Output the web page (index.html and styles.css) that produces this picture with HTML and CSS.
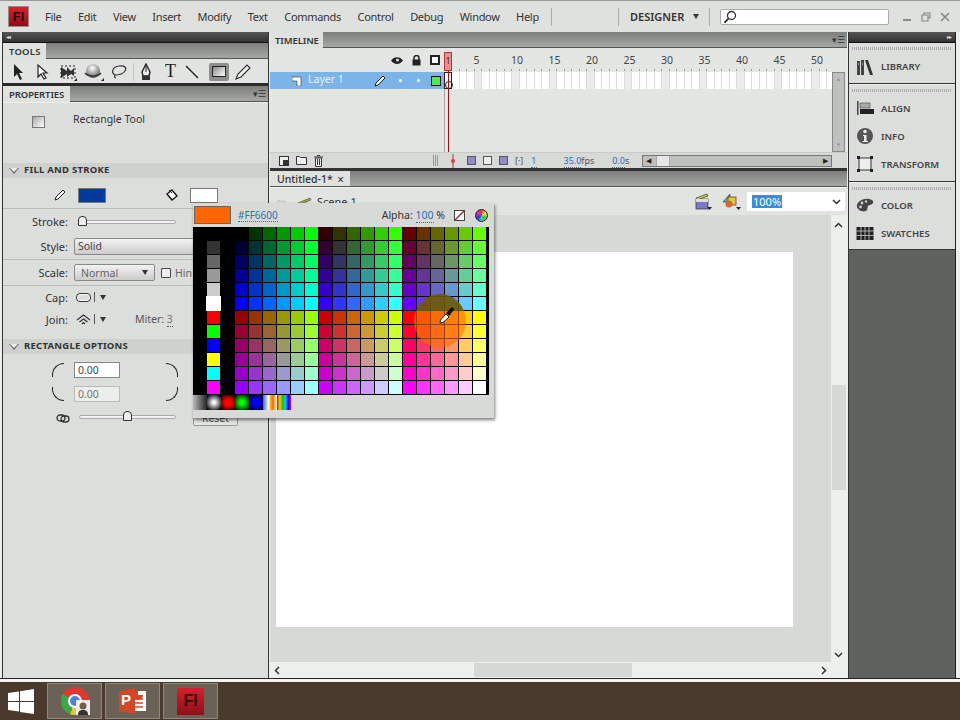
FILE: index.html
```html
<!DOCTYPE html>
<html lang="en">
<head>
<meta charset="utf-8">
<title>Flash Professional</title>
<link rel="stylesheet" href="styles.css">
</head>
<body>
<div class="app">
  <header class="titlebar">
    <div class="fl-logo"><span>Fl</span></div>
    <nav class="menu">
      <span>File</span><span>Edit</span><span>View</span><span>Insert</span><span>Modify</span><span>Text</span><span>Commands</span><span>Control</span><span>Debug</span><span>Window</span><span>Help</span>
    </nav>
    <i class="vsep sep-a"></i>
    <i class="vsep sep-b"></i>
    <span class="workspace">DESIGNER</span>
    <i class="tri-down ws-arrow"></i>
    <i class="vsep sep-c"></i>
    <div class="search">
      <svg width="14" height="14" viewBox="0 0 14 14"><circle cx="8.5" cy="5.5" r="4" fill="none" stroke="#333" stroke-width="1.3"/><path d="M5.6 8.4 1.5 12.6" stroke="#222" stroke-width="1.6"/></svg>
    </div>
    <div class="winbtns">
      <svg width="10" height="10" viewBox="0 0 10 10"><path d="M1 8h8" stroke="#888" stroke-width="2"/></svg>
      <svg width="10" height="10" viewBox="0 0 10 10"><path d="M3 3V1h6v5H7M1 3h6v6H1z" fill="none" stroke="#888" stroke-width="1.2"/></svg>
      <svg width="10" height="10" viewBox="0 0 10 10"><path d="M1 1l8 8M9 1 1 9" stroke="#888" stroke-width="1.6"/></svg>
    </div>
  </header>

  <main class="workspace-area">
    <section class="left-col">
      <div class="collapse-bar"><span class="chev">◂◂</span></div>
      <div class="tabbar"><span class="tab tab-tools">TOOLS</span></div>
      <div class="toolrow">
        <svg class="tool" width="14" height="18" viewBox="0 0 14 18"><path d="M3 1v13l3-3 3 6 2-1-3-6h4z" fill="#222"/></svg>
        <svg class="tool t2" width="14" height="18" viewBox="0 0 14 18"><path d="M3 2v12l3-3 3 5 2-1-3-5h4z" fill="#fff" stroke="#222" stroke-width="1.2"/></svg>
        <svg class="tool t3" width="18" height="18" viewBox="0 0 18 18"><path d="M2 4l6 4V4l4 4 3-3v8l-3-2-4 3v-3l-6 4z" fill="#333"/><path d="M2 3h14v12H2z" fill="none" stroke="#222" stroke-dasharray="2 2"/><path d="M15 18h3v-3z" fill="#222"/></svg>
        <svg class="tool t4" width="20" height="18" viewBox="0 0 20 18"><defs><radialGradient id="ball" cx=".45" cy=".3" r=".75"><stop offset="0" stop-color="#fff"/><stop offset=".6" stop-color="#999"/><stop offset="1" stop-color="#444"/></radialGradient></defs><circle cx="9" cy="8" r="7" fill="url(#ball)"/><path d="M1 10c3 4 13 4 16 0" fill="none" stroke="#333" stroke-width="1.3"/><path d="M17 18h3v-3z" fill="#222"/></svg>
        <svg class="tool t5" width="18" height="18" viewBox="0 0 18 18"><path d="M5 12C1 10 2 4 9 3c6-1 8 2 6 5-2 3-6 4-10 4zM5 12c-1 2 0 3 1 3" fill="none" stroke="#333" stroke-width="1.2"/></svg>
        <i class="toolsep"></i>
        <svg class="tool t6" width="14" height="18" viewBox="0 0 14 18"><path d="M7 1l4 8-1 4H4L3 9z" fill="#eee" stroke="#222" stroke-width="1.4"/><path d="M7 3v6" stroke="#222"/><rect x="3" y="13" width="8" height="4" fill="#333"/></svg>
        <span class="t-glyph">T</span>
        <svg class="tool t8" width="16" height="16" viewBox="0 0 16 16"><path d="M2 2l12 12" stroke="#222" stroke-width="1.4"/></svg>
        <div class="rect-tool"><i></i></div>
        <svg class="tool t10" width="18" height="18" viewBox="0 0 18 18"><path d="M2 16l2-5L13 2l3 3-9 9z" fill="#eee" stroke="#333" stroke-width="1.2"/></svg>
      </div>
      <div class="darkline"></div>
      <div class="tabbar"><span class="tab tab-props">PROPERTIES</span><span class="panel-menu">▾☰</span></div>
      <div class="props">
        <div class="prop-head"><i class="rect-mini"></i><span>Rectangle Tool</span></div>
        <div class="section-head"><i class="tri-open"></i>FILL AND STROKE</div>
        <div class="row fill-row">
          <svg class="pencil" width="12" height="12" viewBox="0 0 12 12"><path d="M1 11l1-3 7-7 2 2-7 7z" fill="#fff" stroke="#222"/></svg>
          <i class="stroke-swatch"></i>
          <svg class="bucket" width="14" height="14" viewBox="0 0 14 14"><path d="M2 6l5-4 5 6-5 4z" fill="#fff" stroke="#111" stroke-width="1.3"/><path d="M4 2l3 3" stroke="#111"/></svg>
          <i class="fill-swatch"></i>
        </div>
        <div class="row-group">
          <div class="row"><label>Stroke:</label><div class="slider s-stroke"><i class="thumb"></i></div></div>
          <div class="row"><label>Style:</label><div class="combo combo-wide">Solid</div></div>
        </div>
        <div class="row-group">
          <div class="row"><label>Scale:</label><div class="combo combo-scale"><span>Normal</span><i class="tri-down"></i></div><i class="check"></i><span class="hint">Hin</span></div>
        </div>
        <div class="row-group plain">
          <div class="row"><label>Cap:</label><i class="cap-icon"></i><b class="bar"></b><i class="tri-down"></i></div>
          <div class="row"><label>Join:</label>
            <svg class="join-icon" width="15" height="11" viewBox="0 0 15 11"><path d="M1 6l6.500-5 6.500 5M3.500 8l4-3 4 3M6 10l1.500-1.500L9 10" fill="none" stroke="#333" stroke-width="1.2"/></svg>
            <b class="bar"></b><i class="tri-down"></i><span class="miter">Miter: <u>3</u></span></div>
        </div>
        <div class="section-head"><i class="tri-open"></i>RECTANGLE OPTIONS</div>
        <div class="corners">
          <i class="corner c-tl"></i><input class="num" value="0.00" readonly><i class="corner c-tr"></i>
          <i class="corner c-bl"></i><input class="num dim" value="0.00" readonly><i class="corner c-br"></i>
        </div>
        <div class="row link-row">
          <svg width="14" height="9" viewBox="0 0 14 9"><rect x="1" y="1" width="8" height="6" rx="3" fill="none" stroke="#333" stroke-width="1.3"/><rect x="5" y="2" width="8" height="6" rx="3" fill="none" stroke="#333" stroke-width="1.3"/></svg>
          <div class="slider s-radius"><i class="thumb"></i></div>
          <span class="reset">Reset</span>
        </div>
      </div>
    </section>

    <section class="center-col">
      <div class="timeline">
        <div class="tabbar"><span class="tab tab-tl">TIMELINE</span><span class="panel-menu">▾☰</span></div>
        <div class="tl-main">
          <div class="tl-body">
            <div class="tl-ruler">
              <div class="tl-icons">
                <svg width="12" height="9" viewBox="0 0 12 9"><path d="M0 4.500C3 0 9 0 12 4.500 9 9 3 9 0 4.500z" fill="#222"/><circle cx="6.500" cy="4" r="1.500" fill="#ddd"/></svg>
                <svg width="9" height="11" viewBox="0 0 9 11"><path d="M2 5V3a2.500 2.500 0 0 1 5 0v2" fill="none" stroke="#222" stroke-width="1.500"/><rect x="0.500" y="4.500" width="8" height="6" fill="#222"/></svg>
                <i class="outline-sq"></i>
              </div>
              <div class="ruler-nums" id="ruler"></div>
            </div>
            <div class="tl-layer">
              <div class="layer-info">
                <svg class="layer-page" width="10" height="10" viewBox="0 0 10 10"><path d="M0 1h9v9H5V5H0z" fill="#fff" stroke="#333" stroke-width=".6"/></svg>
                <span class="layer-name">Layer 1</span>
                <svg class="layer-pen" width="12" height="12" viewBox="0 0 12 12"><path d="M1 11l1-3 7-7 2 2-7 7z" fill="#fff" stroke="#222"/></svg>
                <i class="dot d1"></i><i class="dot d2"></i>
                <i class="green-sq"></i>
              </div>
              <div class="frames"><i class="keyframe"></i></div>
            </div>
            <div class="tl-empty"></div>
          </div>
          <div class="tl-vscroll"><i class="arrow-up">▲</i><i class="arrow-dn">▼</i></div>
        </div>
        <div class="tl-foot">
          <svg class="f-i" width="10" height="10" viewBox="0 0 10 10"><rect x=".5" y=".5" width="9" height="9" fill="#eee" stroke="#333"/><rect x="4" y="4" width="5" height="5" fill="#333"/></svg>
          <svg class="f-i" width="11" height="9" viewBox="0 0 11 9"><path d="M.5.500h3l1 1h6v7H.500z" fill="#eee" stroke="#333"/></svg>
          <svg class="f-i" width="9" height="12" viewBox="0 0 9 12"><path d="M1.500 3h6v8.500h-6zM0 2h9M3 .5h3" fill="#eee" stroke="#333"/><path d="M3.500 4v6M5.500 4v6" stroke="#333"/></svg>
          <i class="grip"></i>
          <svg class="f-play" width="6" height="14" viewBox="0 0 6 14"><path d="M3 0v14" stroke="#b33"/><circle cx="3" cy="7" r="2" fill="#c44"/></svg>
          <div class="onion"><i></i><i class="hollow"></i><i></i><span class="bracket">[·]</span></div>
          <u class="f-num">1</u>
          <span class="fps"><u>35.0</u>fps</span>
          <span class="sec"><u>0.0</u>s</span>
          <div class="tl-hscroll"><i class="ar">◀</i><i class="hthumb"></i><i class="ar ar-r">▶</i></div>
        </div>
      </div>
      <div class="doc-tabs"><span class="tab tab-doc">Untitled-1* <em>×</em></span></div>
      <div class="editbar">
        <span class="back">⇦</span>
        <svg class="scene-ic" width="15" height="9" viewBox="0 0 15 9"><path d="M1 6l12-5 1 2L2 8z" fill="#a9a23a" stroke="#444" stroke-width=".6"/><rect x="0" y="7" width="15" height="2" fill="#668"/></svg>
        <span class="scene">Scene 1</span>
        <div class="edit-right">
          <svg width="17" height="17" viewBox="0 0 17 17"><rect x="1" y="6" width="12" height="10" fill="#7c78c4" stroke="#333" stroke-width=".7"/><path d="M1 5l11-4 1 2L2 7z" fill="#d6cb4a" stroke="#333" stroke-width=".7"/><rect x="1" y="6" width="12" height="3" fill="#ddd"/><path d="M12 14h5l-2.500 3z" fill="#222"/></svg>
          <svg width="19" height="17" viewBox="0 0 19 17"><path d="M1 9l7-8v8z" fill="#5dbb7a" stroke="#333" stroke-width=".7"/><rect x="6" y="4" width="8" height="8" fill="#e8c83a" stroke="#333" stroke-width=".7"/><circle cx="7" cy="11" r="3.500" fill="#e0603a"/><path d="M14 14h5l-2.500 3z" fill="#222"/></svg>
          <div class="zoom-select"><span>100%</span><svg width="9" height="6" viewBox="0 0 9 6"><path d="M1 1l3.500 3.500L8 1" fill="none" stroke="#333" stroke-width="1.500"/></svg></div>
        </div>
      </div>
      <div class="stage-wrap">
        <div class="stage-row">
          <div class="pasteboard"><div class="stage"></div></div>
          <div class="stage-v"><i class="sv-thumb"></i><svg class="sv-up" width="9" height="6" viewBox="0 0 9 6"><path d="M1 5l3.500-3.500L8 5" fill="none" stroke="#333" stroke-width="1.500"/></svg><svg class="sv-dn" width="9" height="6" viewBox="0 0 9 6"><path d="M1 1l3.500 3.500L8 1" fill="none" stroke="#333" stroke-width="1.500"/></svg></div>
        </div>
        <div class="stage-h">
          <svg class="sh-l" width="6" height="9" viewBox="0 0 6 9"><path d="M5 1 1.500 4.500 5 8" fill="none" stroke="#333" stroke-width="1.500"/></svg>
          <i class="sh-thumb"></i>
          <svg class="sh-r" width="6" height="9" viewBox="0 0 6 9"><path d="M1 1l3.500 3.500L1 8" fill="none" stroke="#333" stroke-width="1.500"/></svg>
        </div>
      </div>
    </section>

    <aside class="right-col">
      <div class="collapse-bar right"><span class="chev">▸▸</span></div>
      <div class="dock dock-1">
        <i class="dock-grip"></i>
        <div class="dock-item">
          <svg width="18" height="16" viewBox="0 0 18 16"><path d="M1 2h3v14H1zM5 1h3v15H5z" fill="#444"/><path d="M9 1h3l5 15h-3z" fill="#333"/><path d="M2 5h1M6 5h1" stroke="#ddd"/></svg>
          <span>LIBRARY</span>
        </div>
      </div>
      <div class="dock dock-2">
        <i class="dock-grip"></i>
        <div class="dock-item">
          <svg width="18" height="16" viewBox="0 0 18 16"><path d="M1 1h1.500v14H1z" fill="#444"/><rect x="4" y="3" width="10" height="5" fill="#aaa" stroke="#444" stroke-width=".6"/><rect x="4" y="9" width="14" height="5" fill="#222"/></svg>
          <span>ALIGN</span>
        </div>
        <div class="dock-item">
          <svg width="18" height="18" viewBox="0 0 18 18"><circle cx="9" cy="9" r="8" fill="#555"/><circle cx="9" cy="4.500" r="1.800" fill="#eee"/><path d="M7 8h3.500v6H12v1H6.500v-1H8V9H7z" fill="#eee"/></svg>
          <span>INFO</span>
        </div>
        <div class="dock-item">
          <svg width="18" height="18" viewBox="0 0 18 18"><rect x="3" y="3" width="12" height="12" fill="#eee" stroke="#333"/><path d="M1 1h3v3H1zM14 1h3v3h-3zM1 14h3v3H1zM14 14h3v3h-3z" fill="#222"/></svg>
          <span>TRANSFORM</span>
        </div>
      </div>
      <div class="dock dock-3">
        <i class="dock-grip"></i>
        <div class="dock-item">
          <svg width="18" height="14" viewBox="0 0 18 14"><path d="M1 9C0 4 7 0 13 1c6 1 5 5 1 6-3 0-2 3-3 5-2 3-9 1-10-3z" fill="#444"/><circle cx="6" cy="5" r="1.400" fill="#ccc"/><circle cx="10" cy="3.500" r="1.200" fill="#ccc"/><circle cx="4.500" cy="9" r="1.400" fill="#ccc"/></svg>
          <span>COLOR</span>
        </div>
        <div class="dock-item">
          <svg width="17" height="13" viewBox="0 0 17 13"><rect width="17" height="13" fill="#222"/><path d="M4.500 0v13M8.500 0v13M12.500 0v13M0 4h17M0 8.500h17" stroke="#ccc" stroke-width=".8"/></svg>
          <span>SWATCHES</span>
        </div>
      </div>
      <div class="dock-empty"></div>
    </aside>
  </main>

  <footer class="taskbar">
    <svg class="win" width="26" height="25" viewBox="0 0 26 25"><path d="M0 4l11-1.500V12H0zM12 2.300 26 0v12H12zM0 13h11v9.500L0 21zM12 13h14v12l-14-2z" fill="#fff"/></svg>
    <div class="task-btn">
      <div class="chrome"><i></i></div>
      <svg class="badge" width="14" height="15" viewBox="0 0 14 15"><rect width="14" height="15" fill="#eee"/><circle cx="7" cy="6" r="3.500" fill="#7a5a45"/><path d="M2 15c0-4 2-5 5-5s5 1 5 5z" fill="#333"/></svg>
    </div>
    <div class="task-btn">
      <svg width="28" height="26" viewBox="0 0 28 26"><rect x="12" y="3" width="15" height="20" fill="#fff"/><path d="M15 11h9M15 15h9M15 19h9" stroke="#d24726" stroke-width="1.500"/><path d="M0 3l16-3v26L0 23z" fill="#d24726"/><path d="M19 2a5 5 0 1 0 5 5h-5z" fill="#d24726"/></svg>
      <span class="ppt-p">P</span>
    </div>
    <div class="task-btn"><div class="fl-logo task-logo"><span>Fl</span></div></div>
  </footer>

  <div class="picker">
    <div class="picker-top">
      <i class="current"></i>
      <span class="hex">#FF6600</span>
      <span class="alpha">Alpha: <u>100</u> %</span>
      <svg class="nocolor" width="11" height="11" viewBox="0 0 11 11"><rect x=".5" y=".5" width="10" height="10" fill="#fff" stroke="#444"/><path d="M1 10 10 1" stroke="#b02030" stroke-width="1.500"/></svg>
      <i class="wheel"></i>
    </div>
    <div class="palette" id="palette"></div>
    <div class="gradients">
      <i class="g g-gray"></i><i class="g g-white"></i><i class="g g-red"></i><i class="g g-green"></i><i class="g g-blue"></i><i class="g g-bands"></i><i class="g g-rainbow"></i>
    </div>
  </div>
  <i class="highlight"></i>
  <svg class="dropper" width="17" height="17" viewBox="0 0 17 17"><path d="M1 16l.500-3L7 7l3 3-6 5.500z" fill="#fff" stroke="#222"/><path d="M7 6l3.500-3.500c1-2 3-2.500 4-1.500s.5 3-1.500 4L10.500 9z" fill="#111"/></svg>
  <i class="playhead"><span>1</span></i>
</div>
<script src="app.js"></script>
</body>
</html>
```
FILE: styles.css
```css
* { box-sizing: border-box; }
html, body { margin: 0; padding: 0; }
body { width: 960px; height: 720px; overflow: hidden; background: #fff; font-family: "Noto Sans", "Open Sans", sans-serif; font-size: 11px; color: #333; }
i, em { font-style: normal; display: block; }
u { text-decoration: none; border-bottom: 1px dotted #2a6fb0; color: #2a6fb0; }
.app { position: relative; width: 960px; height: 720px; display: flex; flex-direction: column; background: #e4e6e4; }

/* title bar */
.titlebar { height: 32px; flex: none; display: flex; align-items: center; background: #dfe1df; border-top: 1px solid #999; padding-left: 8px; }
.fl-logo { width: 21px; height: 21px; background: linear-gradient(#d8202c, #8e0f18); border: 1px solid #9a8a8a; display: flex; align-items: center; justify-content: center; color: #2a0508; font: bold 13px "Liberation Sans", sans-serif; }
.menu { display: flex; gap: 16.500px; margin-left: 16px; font-size: 11px; letter-spacing: -.3px; color: #333; width: 494px; white-space: nowrap; }
.vsep { width: 1px; height: 18px; background: #aaa; flex: none; }
.sep-a { margin-left: 12px; }
.sep-b { margin-left: 66px; }
.workspace { margin-left: 11px; font-weight: 600; font-size: 11px; width: 56px; white-space: nowrap; }
.tri-down { width: 0; height: 0; border-left: 3.500px solid transparent; border-right: 3.500px solid transparent; border-top: 5px solid #333; flex: none; }
.ws-arrow { margin-left: 7px; }
.sep-c { margin-left: 10px; }
.search { width: 169px; height: 16px; margin-left: 10px; background: #fff; border: 1px solid #aaa; border-radius: 2px; display: flex; align-items: center; padding-left: 2px; }
.winbtns { display: flex; gap: 9px; margin-left: 13px; }

/* columns */
.workspace-area { height: 647px; flex: none; display: flex; background: #eceeec; padding-left: 2px; border-bottom: 1px solid #222; }
.left-col { width: 267px; flex: none; display: flex; flex-direction: column; background: #dcdedc; border-left: 1px solid #333; border-right: 1px solid #333; }
.center-col { width: 577px; margin-left: 1px; flex: none; display: flex; flex-direction: column; }
.right-col { width: 108px; margin-left: 1px; flex: none; display: flex; flex-direction: column; border-right: 1px solid #222; border-left: 1px solid #333; }

.collapse-bar { height: 11px; background: linear-gradient(#555, #333); color: #ddd; font-size: 6px; line-height: 11px; padding-left: 3px; letter-spacing: -1px; flex: none; border-bottom: 1px solid #111; }
.collapse-bar.right { text-align: right; padding-right: 4px; }
.tabbar { height: 16px; flex: none; display: flex; justify-content: space-between; background: linear-gradient(#7d7f7d, #a5a7a5); border-bottom: 1px solid #555; }
.tab { height: 16px; background: #e0e2e0; padding: 0 6px; font-size: 9.500px; font-weight: 600; line-height: 17px; color: #333; letter-spacing: -.1px; }
.tab-tools { width: 43px; letter-spacing: .2px; }
.tab-props { width: 67px; }
.tab-tl { width: 53px; padding-left: 5px; }
.panel-menu { color: #333; font-size: 9px; line-height: 15px; padding-right: 2px; }

.toolrow { height: 24px; flex: none; position: relative; display: flex; align-items: center; padding: 1px 0 0 8px; background: #e2e4e2; }
.tool { flex: none; }
.t2 { margin-left: 10px; }
.t3 { margin-left: 10px; }
.t4 { margin-left: 7px; }
.t5 { margin-left: 6px; }
.toolsep { width: 1px; height: 18px; background: #c4c6c4; margin-left: 5px; flex: none; }
.t6 { margin-left: 5px; }
.t-glyph { margin-left: 12px; font: 18px "Liberation Serif", serif; color: #222; width: 11px; }
.t8 { margin-left: 8px; }
.rect-tool { width: 20px; height: 18px; margin-left: 9px; background: #8d8f8d; border-radius: 2px; display: flex; align-items: center; justify-content: center; }
.rect-tool i { width: 14px; height: 11px; background: linear-gradient(135deg, #888, #fff); border: 1px solid #222; }
.t10 { margin-left: 5px; }
.darkline { height: 3px; background: #2a2a2a; flex: none; }

/* properties */
.props { flex: 1; background: #dcdedc; display: flex; flex-direction: column; min-height: 0; overflow: hidden; border-top: 1px solid #eee; }
.prop-head { height: 60px; flex: none; position: relative; padding: 9px 0 0 70px; font-size: 10.500px; }
.rect-mini { position: absolute; left: 29px; top: 13px; width: 13px; height: 12px; background: linear-gradient(135deg, #aaa, #fff); border: 1px solid #777; }
.section-head { height: 15px; flex: none; background: #cfd1cf; display: flex; align-items: center; font-size: 9.500px; font-weight: 700; color: #333; padding: 0 0 2px 6px; gap: 5px; letter-spacing: .25px; }
.tri-open { width: 0; height: 0; position: relative; top: 1px; border-left: 5px solid transparent; border-right: 5px solid transparent; border-top: 6px solid #666; }
.tri-open::after { content: ""; position: absolute; left: -4px; top: -6px; width: 0; height: 0; border-left: 4px solid transparent; border-right: 4px solid transparent; border-top: 4.500px solid #eee; }
.row { height: 25px; display: flex; align-items: center; flex: none; }
.row label { width: 65px; text-align: right; font-size: 11px; margin-right: 6px; flex: none; }
.fill-row { height: 31px; border-bottom: 1px solid #bbb; padding-top: 4px; }
.pencil { margin-left: 51px; }
.stroke-swatch { width: 28px; height: 15px; background: #003a9e; border: 1px solid #777; margin-left: 12px; }
.bucket { margin-left: 59px; }
.fill-swatch { width: 28px; height: 15px; background: #fff; border: 1px solid #777; margin-left: 11px; }
.row-group { border-bottom: 1px solid #bbb; flex: none; }
.row-group.plain { border-bottom: 0; height: 53px; }
.plain .row { height: 22px; }
.slider { position: relative; height: 4px; background: #f2f2f2; border: 1px solid #aaa; border-radius: 2px; flex: none; }
.s-stroke { width: 97px; margin-left: 5px; }
.thumb { position: absolute; width: 9px; height: 10px; top: -5px; background: #eee; border: 1px solid #333; border-radius: 4px 4px 0 0; }
.s-stroke .thumb { left: -2px; }
.s-radius { width: 97px; margin-left: 9px; margin-top: -4px; }
.s-radius .thumb { left: 43px; }
.combo { height: 17px; background: linear-gradient(#f2f2f2, #ccc); border: 1px solid #888; border-radius: 2px; font-size: 10.500px; line-height: 14px; padding-left: 3px; color: #444; flex: none; }
.combo-wide { width: 140px; }
.combo-scale { width: 81px; display: flex; align-items: center; justify-content: space-between; padding: 0 6px; color: #666; margin-right: 6px; }
.check { width: 10px; height: 10px; border: 1px solid #444; background: #eee; border-radius: 1px; flex: none; }
.hint { margin-left: 4px; font-size: 10.500px; color: #666; }
.cap-icon { width: 15px; height: 9px; margin-left: 2px; border: 1.500px solid #333; border-radius: 4px; box-shadow: inset 0 0 0 1px #fff; }
.join-icon { margin-left: 2px; }
.bar { width: 1px; height: 10px; background: #555; margin: 0 5px 0 3px; flex: none; }
.miter { margin-left: 29px; color: #555; font-size: 10.500px; }
.miter u { color: #777; border-color: #555; }
.corners { display: grid; grid-template-columns: 24px 46px 60px; grid-auto-rows: 24px; justify-content: start; align-items: center; padding-left: 47px; height: 52px; padding-top: 4px; flex: none; }
.num { width: 46px; height: 16px; border: 1px solid #888; background: #fff; font: 10.500px "Noto Sans", sans-serif; color: #444; padding: 0 0 0 3px; }
.num.dim { background: #eceeec; border-color: #bbb; color: #777; }
.corner { width: 12px; height: 14px; border: 1.500px solid #222; }
.c-tl { border-right: 0; border-bottom: 0; border-radius: 12px 0 0 0; margin-left: 2px; }
.c-bl { border-right: 0; border-top: 0; border-radius: 0 0 0 12px; margin-left: 2px; }
.c-tr { border-left: 0; border-bottom: 0; border-radius: 0 12px 0 0; margin-left: 46px; }
.c-br { border-left: 0; border-top: 0; border-radius: 0 0 12px 0; margin-left: 46px; }
.link-row { padding-left: 53px; }
.reset { margin-left: 17px; width: 45px; height: 15px; border: 1px solid #999; border-radius: 2px; text-align: center; font-size: 10.500px; line-height: 13px; color: #555; background: #e4e4e4; }

/* timeline */
.timeline { height: 136px; flex: none; display: flex; flex-direction: column; background: #e4e6e4; }
.tl-main { flex: 1; display: flex; min-height: 0; }
.tl-body { flex: 1; min-width: 0; display: flex; flex-direction: column; }
.tl-ruler { height: 24px; flex: none; display: flex; }
.tl-icons { width: 174px; flex: none; display: flex; align-items: center; justify-content: flex-end; gap: 9px; padding-right: 4px; }
.outline-sq { width: 10px; height: 10px; border: 2px solid #222; background: #fff; }
.ruler-nums { flex: 1; position: relative; display: flex; font-size: 10.500px; color: #444; line-height: 24px; background: repeating-linear-gradient(90deg, #999 0 1px, transparent 1px 7.500px) 0 21px / 100% 2px no-repeat; overflow: hidden; }
.ruler-nums span { flex: none; text-align: left; width: 37.500px; }
.ruler-nums span:first-child { width: 29.500px; }
.tl-layer { height: 17px; flex: none; display: flex; }
.layer-info { width: 174px; flex: none; background: #7ab4e8; position: relative; display: flex; align-items: center; }
.layer-page { margin-left: 22px; flex: none; }
.layer-name { margin: -3px 0 0 6px; color: #e8f2fb; font-size: 10.500px; white-space: nowrap; width: 38px; }
.layer-pen { margin-left: 28px; flex: none; }
.dot { width: 3px; height: 3px; border-radius: 50%; background: #fff; flex: none; }
.d1 { margin-left: 13px; }
.d2 { margin-left: 15px; }
.green-sq { width: 10px; height: 10px; background: #4bea52; border: 1px solid #111; margin-left: 11px; flex: none; }
.frames { flex: 1; background: repeating-linear-gradient(90deg, #fff 0 30px, #ececec 30px 37.500px); position: relative; }
.frames::before { content: ""; position: absolute; inset: 0; background: repeating-linear-gradient(90deg, #dcdcdc 0 1px, transparent 1px 7.500px); }
.keyframe { position: absolute; left: 0; top: 0; width: 8px; height: 17px; background: #fff; border: 1px solid #222; }
.keyframe::after { content: ""; position: absolute; left: 0; top: 8px; width: 6px; height: 6px; border: 1px solid #222; border-radius: 50%; }
.tl-empty { flex: 1; background: linear-gradient(#a8aaa8, #a8aaa8) 174px 0 / 1px 100% no-repeat; }
.tl-vscroll { width: 13px; flex: none; margin: 24px 2px 0 0; background: #bfc1bf; border: 1px solid #888; position: relative; color: #999; font-size: 6px; text-align: center; }
.arrow-up { position: absolute; top: 2px; left: 0; right: 0; }
.arrow-dn { position: absolute; bottom: 2px; left: 0; right: 0; }
.tl-foot { height: 16px; flex: none; background: #d8dad8; display: flex; align-items: center; font-size: 9px; color: #555; border-top: 1px solid #c8cac8; padding-left: 9px; }
.f-i { margin-right: 7px; flex: none; }
.grip { width: 6px; height: 11px; margin-left: 103px; background: repeating-linear-gradient(90deg, #999 0 1px, transparent 1px 2px); flex: none; }
.f-play { margin-left: 11px; flex: none; }
.onion { display: flex; align-items: center; margin-left: 11px; gap: 7px; flex: none; }
.onion i { width: 9px; height: 9px; background: #8d8bc8; border: 1px solid #555; }
.onion .hollow { background: #eee; }
.bracket { font-size: 9px; color: #555; }
.f-num { margin-left: 8px; flex: none; }
.fps { margin-left: 27px; flex: none; }
.sec { margin-left: 18px; flex: none; }
.tl-hscroll { margin-left: 13px; width: 190px; height: 12px; background: #bfc1bf; border: 1px solid #777; position: relative; color: #222; font-size: 7px; line-height: 10px; display: flex; flex: none; padding-left: 3px; }
.hthumb { width: 14px; height: 10px; background: #e6e6e6; margin-left: 5px; border-left: 1px solid #aaa; border-right: 1px solid #aaa; }
.ar-r { margin-left: auto; padding-right: 3px; }
.doc-tabs { height: 19px; flex: none; background: linear-gradient(#7d7f7d, #a5a7a5); border-top: 3px solid #333; border-bottom: 1px solid #555; }
.tab-doc { display: flex; width: 80px; height: 15px; align-items: center; justify-content: space-between; font-size: 10.500px; font-weight: 500; letter-spacing: 0; padding: 1px 6px 0 7px; }
.tab-doc em { font-size: 12px; font-weight: 400; }
.editbar { height: 28px; flex: none; display: flex; align-items: center; background: #e2e4e2; border-top: 1px solid #f2f2f2; padding-left: 6px; }
.back { color: #bbb; font-size: 12px; width: 22px; }
.scene-ic { margin-left: -1px; }
.scene { margin-left: 5px; font-size: 11px; }
.edit-right { margin-left: auto; display: flex; align-items: center; gap: 10px; margin-right: 2px; }
.zoom-select { width: 98px; height: 19px; margin-left: -4px; background: #fff; display: flex; align-items: center; justify-content: space-between; padding: 0 4px 0 5px; font-size: 11px; }
.zoom-select span { background: #3390e0; color: #fff; padding: 0 1px; line-height: 13px; }
.stage-wrap { flex: 1; min-height: 0; display: flex; flex-direction: column; background: #eef0ee; }
.stage-row { flex: 1; display: flex; min-height: 0; }
.pasteboard { flex: 1; min-width: 0; background: #d7d9d7; padding: 37px 0 0 6px; }
.stage { width: 517px; height: 375px; background: #fff; }
.stage-v { width: 16px; flex: none; position: relative; }
.sv-thumb { position: absolute; left: 1px; right: 1px; top: 170px; height: 105px; background: #d6d8d6; }
.sv-up { position: absolute; left: 3px; top: 7px; }
.sv-dn { position: absolute; left: 3px; bottom: 4px; }
.stage-h { height: 16px; flex: none; position: relative; }
.sh-l { position: absolute; left: 4px; top: 4px; }
.sh-r { position: absolute; left: 551px; top: 4px; }
.sh-thumb { position: absolute; left: 204px; width: 158px; top: 1px; bottom: 1px; background: #d6d8d6; }

/* right dock */
.dock { background: #dcdedc; flex: none; border-bottom: 1px solid #333; padding-top: 4px; }
.dock-1 { height: 41px; }
.dock-2 { height: 98px; border-top: 1px solid #eee; }
.dock-3 { height: 68px; border-top: 1px solid #eee; }
.dock-grip { height: 3px; margin: 0 3px; background: repeating-linear-gradient(90deg, #aaa 0 1px, transparent 1px 2px); }
.dock-item { height: 28px; display: flex; align-items: center; font-size: 9.500px; font-weight: 600; color: #444; }
.dock-1 .dock-item { height: 33px; }
.dock-2 .dock-item:first-of-type { margin-top: 2px; }
.dock-3 .dock-item:first-of-type { margin-top: 1px; }
.dock-item svg { margin-left: 7px; flex: none; width: 18px; }
.dock-item span { margin-left: 7px; }
.dock-empty { flex: 1; background: #5f625f; }

/* task bar */
.taskbar { flex: 1; display: flex; align-items: center; background: #4a3a2d; border-top: 3px solid #f3f3f3; gap: 3px; padding-left: 8px; }
.win { margin-right: 10px; flex: none; }
.task-btn { width: 55px; height: 36px; background: #6a6157; border: 1px solid #8e8880; display: flex; align-items: center; justify-content: center; position: relative; }
.chrome { width: 28px; height: 28px; border-radius: 50%; background: conic-gradient(#e0382e 0 120deg, #f2c32e 120deg 200deg, #3da846 200deg 300deg, #e0382e 300deg); position: relative; }
.chrome i { position: absolute; left: 7px; top: 7px; width: 14px; height: 14px; border-radius: 50%; background: #4a80e8; border: 2px solid #fff; }
.badge { position: absolute; left: 28px; top: 16px; }
.ppt-p { position: absolute; left: 15px; top: 7px; color: #fff; font: bold 15px "Liberation Sans", sans-serif; }
.task-logo { width: 27px; height: 27px; border: 0; font-size: 16px; }

/* colour picker popup */
.picker { position: absolute; left: 193px; top: 203px; width: 301px; height: 215px; background: #d8dad8; box-shadow: 1px 2px 3px rgba(0,0,0,.5); }
.picker-top { height: 24px; display: flex; align-items: center; font-size: 10.500px; position: relative; }
.current { width: 37px; height: 18px; margin-left: 1px; background: #ff6600; border: 1px solid #666; }
.hex { margin-left: 7px; color: #2a6fb0; border-bottom: 1px dotted #2a6fb0; line-height: 12px; font-size: 10px; }
.alpha { margin-left: auto; margin-right: 9px; color: #333; }
.nocolor { margin-right: 10px; flex: none; }
.wheel { width: 13px; height: 13px; border-radius: 50%; margin-right: 6px; background: conic-gradient(#e33, #ee3, #3c3, #3cc, #33c, #c3c, #e33); border: 1px solid #222; }
.palette { width: 296px; display: grid; grid-template-columns: repeat(21, 13px); grid-auto-rows: 13px; gap: 1px; padding: 0 1px 1px 0; background: #000; }
.palette i.sel { box-shadow: 0 0 0 1px #fff; position: relative; }
.gradients { display: flex; height: 15px; width: 99px; }
.g { width: 14px; height: 15px; flex: none; }
.g-gray { background: linear-gradient(90deg, #bbb, #222); }
.g-white { background: radial-gradient(circle, #fff 10%, #000 90%); }
.g-red { background: radial-gradient(circle, #f00 30%, #000 100%); }
.g-green { background: radial-gradient(circle, #0f0 20%, #000 100%); }
.g-blue { background: radial-gradient(circle, #00f 30%, #000 100%); }
.g-bands { background: linear-gradient(90deg, #36f, #fff 40%, #fc0 50%, #f60 70%, #fff); }
.g-rainbow { background: linear-gradient(90deg, #f00, #fc0, #0c0, #0cf, #00f, #c0f); }
.highlight { position: absolute; left: 414px; top: 294px; width: 52px; height: 54px; border-radius: 50%; background: linear-gradient(rgba(110,90,0,.9) 0 17px, rgba(255,110,0,.6) 17px 100%); }
.dropper { position: absolute; left: 439px; top: 307px; }
.playhead { position: absolute; left: 444px; top: 52px; width: 8px; height: 19px; background: #f08c8c; border: 1px solid #b33; font-size: 9px; line-height: 16px; color: #333; text-align: center; }
.playhead::after { content: ""; position: absolute; left: 3px; top: 18px; width: 1px; height: 81px; background: #a01010; }
```
FILE: app.js
```js
var levels = ['00', '33', '66', '99', 'CC', 'FF'];
var left = ['000000', '333333', '666666', '999999', 'CCCCCC', 'FFFFFF', 'FF0000', '00FF00', '0000FF', 'FFFF00', '00FFFF', 'FF00FF'];
var palette = document.getElementById('palette');
for (var row = 0; row < 12; row++) {
  var reds = row < 6 ? [0, 1, 2] : [3, 4, 5];
  var b = levels[row % 6];
  var colors = ['000000', left[row], '000000'];
  reds.forEach(function (r) {
    levels.forEach(function (g) { colors.push(levels[r] + g + b); });
  });
  colors.forEach(function (c, col) {
    var cell = document.createElement('i');
    cell.style.background = '#' + c;
    if (row === 5 && col === 1) cell.className = 'sel';
    palette.appendChild(cell);
  });
}
var ruler = document.getElementById('ruler');
['', 5, 10, 15, 20, 25, 30, 35, 40, 45, 50].forEach(function (n) {
  var s = document.createElement('span');
  s.textContent = n;
  ruler.appendChild(s);
});
```
